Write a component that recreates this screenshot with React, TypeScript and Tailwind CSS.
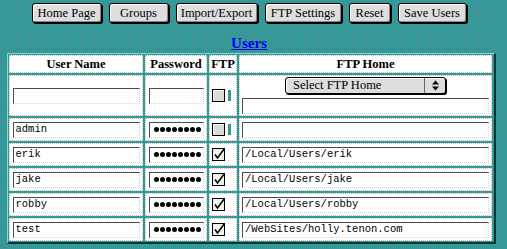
import React from 'react';

const buttons = [
  { label: 'Home Page', w: 'w-[70px]' },
  { label: 'Groups', w: 'w-[60px]' },
  { label: 'Import/Export', w: 'w-[82px]' },
  { label: 'FTP Settings', w: 'w-[77px]' },
  { label: 'Reset', w: 'w-[42px]' },
  { label: 'Save Users', w: 'w-[69px]' },
];

const users = [
  { name: 'admin', home: '', ftp: false },
  { name: 'erik', home: '/Local/Users/erik', ftp: true },
  { name: 'jake', home: '/Local/Users/jake', ftp: true },
  { name: 'robby', home: '/Local/Users/robby', ftp: true },
  { name: 'test', home: '/WebSites/holly.tenon.com', ftp: true },
];

const serif = "font-['Liberation_Serif',serif]";
const mono = "font-['Liberation_Mono',monospace]";
const inset =
  'bg-white border border-t-[#4a4a4a] border-l-[#4a4a4a] border-b-[#d4d4d4] border-r-[#d4d4d4] [border-bottom-style:dotted] [border-right-style:dotted]';

function Field({ value, width }: { value: string; width: string }) {
  return (
    <div
      className={`${width} h-[16px] ${inset} flex items-center px-[2px] ${mono} text-[10.5px] text-black leading-none overflow-hidden whitespace-nowrap`}
    >
      {value}
    </div>
  );
}

function Dots() {
  return (
    <div className={`w-[55px] h-[16px] ${inset} flex items-center gap-[1px] pl-[4px]`}>
      {Array.from({ length: 8 }).map((_, i) => (
        <span key={i} className="w-[5px] h-[5px] rounded-full bg-black" />
      ))}
    </div>
  );
}

function Check({ on }: { on: boolean }) {
  return (
    <div className="flex items-center gap-[2px]">
      <svg width="15" height="13" viewBox="0 0 15 13">
        <rect x="0.5" y="0.5" width="12" height="12" fill={on ? '#f2f2f2' : '#dcdcdc'} stroke="#000" />
        {!on && <path d="M1.5 11.5V1.5H11.5" stroke="#fff" fill="none" />}
        {on && <path d="M3 6.5L5.5 10L12.5 0.5" stroke="#000" strokeWidth="1.6" fill="none" />}
      </svg>
      {!on && <span className="w-[3px] h-[11px] bg-[#339999] -ml-[1px]" />}
    </div>
  );
}

function Cell({ children, className = '' }: { children?: React.ReactNode; className?: string }) {
  return <div className={`bg-white border border-dotted border-[#bdbdbd] flex items-center ${className}`}>{children}</div>;
}

export default function App() {
  return (
    <div className="w-[507px] h-[249px] bg-[#339999] bg-[radial-gradient(rgba(190,90,100,0.55)_0.6px,transparent_0.9px)] bg-[length:7px_6px] overflow-hidden">
      <div className="pl-[7px] pt-[3px]">
        <div className="w-[484px] flex justify-center gap-[7px]">
          {buttons.map((b) => (
            <div
              key={b.label}
              className={`${b.w} h-[20px] rounded-[3px] border border-black bg-[#dedede] shadow-[inset_1px_1px_0_#fff,inset_-1px_-1px_0_#8a8a8a,1px_1px_0_#000] flex items-center justify-center ${serif} text-[12.5px] text-black`}
            >
              {b.label}
            </div>
          ))}
        </div>

        <div className="w-[484px] flex justify-center mt-[12px] h-[17px]">
          <a className={`${serif} font-bold text-[15px] leading-[17px] text-[#0000ee] underline`}>Users</a>
        </div>

        <div className="w-[489px] grid grid-cols-[134px_62px_28px_253px] grid-rows-[18px_41px_repeat(5,23px)] gap-[2px] p-[1px] border-t border-l border-t-[#7fd8d8] border-l-[#7fd8d8] border-b-2 border-r-2 border-b-[#0a3434] border-r-[#0a3434] bg-[#339999] mt-[1px]">
          {['User Name', 'Password', 'FTP', 'FTP Home'].map((h) => (
            <Cell key={h} className={`justify-center ${serif} font-bold text-[12.5px] text-black`}>
              {h}
            </Cell>
          ))}

          <Cell className="justify-center">
            <Field value="" width="w-[127px]" />
          </Cell>
          <Cell className="justify-center">
            <Field value="" width="w-[55px]" />
          </Cell>
          <Cell className="pl-[2px]">
            <Check on={false} />
          </Cell>
          <Cell className="flex-col justify-between items-center py-[1px]">
            <div className={`w-[161px] h-[17px] rounded-[3px] border border-black bg-[#dedede] shadow-[inset_1px_1px_0_#fff,1px_1px_0_#000] flex ${serif} text-[12.5px] text-black`}>
              <span className="flex-1 pl-[7px] leading-[15px]">Select FTP Home</span>
              <span className="w-[21px] border-l border-[#666] flex items-center justify-center">
                <svg width="7" height="11" viewBox="0 0 7 11">
                  <path d="M3.5 0.5L7 4.5H0Z" fill="#000" />
                  <path d="M0 6.5H7L3.5 10.5Z" fill="#000" />
                </svg>
              </span>
            </div>
            <Field value="" width="w-[247px]" />
          </Cell>

          {users.map((u) => (
            <React.Fragment key={u.name}>
              <Cell className="justify-center">
                <Field value={u.name} width="w-[127px]" />
              </Cell>
              <Cell className="justify-center">
                <Dots />
              </Cell>
              <Cell className="pl-[2px]">
                <Check on={u.ftp} />
              </Cell>
              <Cell className="justify-center">
                <Field value={u.home} width="w-[247px]" />
              </Cell>
            </React.Fragment>
          ))}
        </div>
      </div>
    </div>
  );
}
